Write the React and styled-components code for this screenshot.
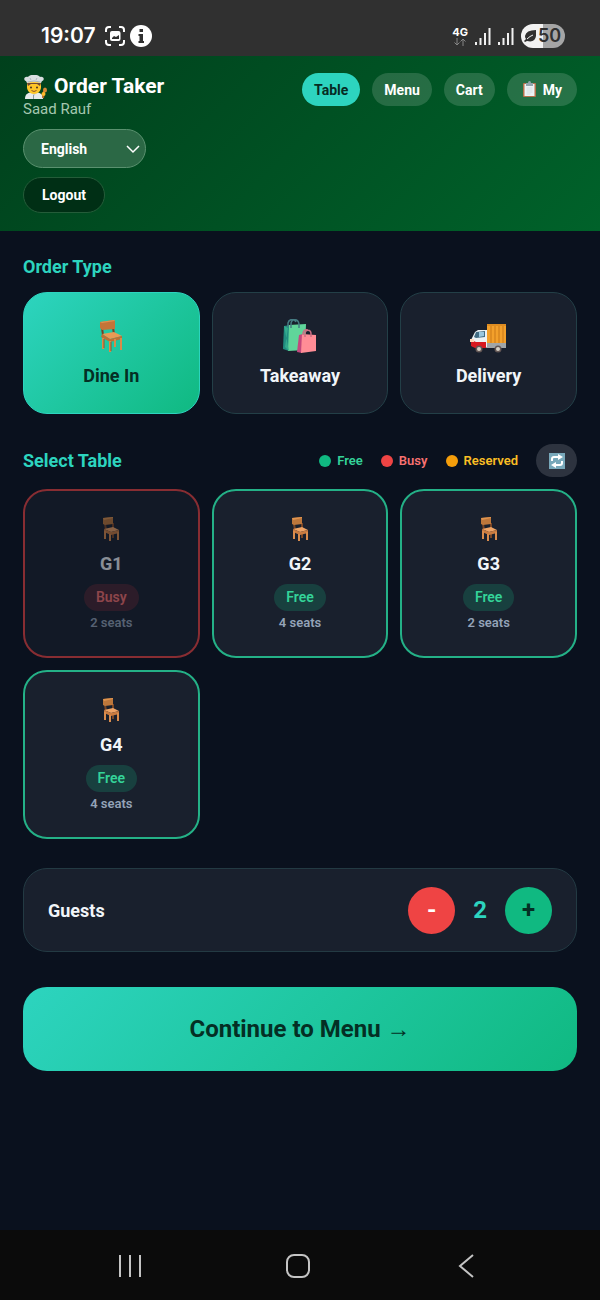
import React, { useState } from "react";
import styled, { createGlobalStyle } from "styled-components";

const GlobalStyle = createGlobalStyle`
  *, *::before, *::after { box-sizing: border-box; }
  body {
    margin: 0;
    background: #0a111e;
    color: #f1f5f9;
    font-family: Roboto, "Liberation Sans", sans-serif;
  }
  button, select { font: inherit; color: inherit; cursor: pointer; }
`;

const Screen = styled.div`
  display: flex;
  flex-direction: column;
  min-height: 100vh;
`;

const StatusBar = styled.div`
  display: flex;
  justify-content: space-between;
  align-items: center;
  height: 56px;
  padding: 16px 35px 0 41px;
  background: #303030;
  color: #fff;
`;

const StatusGroup = styled.div`
  display: flex;
  align-items: center;
  gap: ${(p) => p.$gap}px;
`;

const Clock = styled.span`
  margin-right: 4px;
  font: 600 21px/24px Inter, sans-serif;
`;

const Network = styled.div`
  display: flex;
  flex-direction: column;
  align-items: center;
  font: 700 11px/11px Inter, sans-serif;
`;

const Battery = styled.div`
  display: flex;
  align-items: center;
  gap: 1px;
  width: 44px;
  height: 24px;
  padding-left: 3px;
  border-radius: 12px;
  background: linear-gradient(90deg, #f2f2f2 50%, #a5a5a5 50%);
  color: #303030;
  font: 600 18px/24px Inter, sans-serif;
`;

const Header = styled.header`
  display: flex;
  justify-content: space-between;
  align-items: flex-start;
  padding: 17px 23px 18px;
  background: linear-gradient(135deg, #00401c, #00622a);
`;

const Brand = styled.div`
  display: flex;
  flex-direction: column;
  align-items: flex-start;
`;

const Title = styled.h1`
  display: flex;
  align-items: center;
  gap: 6px;
  margin: 0;
  font-size: 21px;
  line-height: 27px;
  font-weight: 700;
  color: #fff;
`;

const UserName = styled.div`
  margin-bottom: 10px;
  font-size: 15px;
  line-height: 19px;
  color: #a5c8b0;
`;

const LanguageField = styled.label`
  position: relative;
  display: block;
  margin-bottom: 9px;
`;

const LanguageSelect = styled.select`
  display: block;
  appearance: none;
  width: 123px;
  height: 39px;
  padding: 0 32px 0 17px;
  border: 1px solid #5a916f;
  border-radius: 20px;
  background: #2b6845;
  color: #fff;
  font-size: 14px;
  font-weight: 700;
`;

const SelectArrow = styled.svg`
  position: absolute;
  right: 6px;
  top: 16px;
  pointer-events: none;
`;

const LogoutButton = styled.button`
  height: 36px;
  padding: 0 18px;
  border: 1px solid #245c39;
  border-radius: 18px;
  background: #002f15;
  color: #fff;
  font-size: 14px;
  font-weight: 700;
`;

const Tabs = styled.nav`
  display: flex;
  gap: 12px;
`;

const Tab = styled.button`
  display: flex;
  align-items: center;
  gap: 6px;
  height: 33px;
  padding: 0 ${(p) => (p.$wide ? 15 : 12)}px;
  border: 0;
  border-radius: 17px;
  background: ${(p) => (p.$active ? "#2dd4bf" : "rgba(255, 255, 255, 0.15)")};
  color: ${(p) => (p.$active ? "#062b23" : "#fff")};
  font-size: 14px;
  font-weight: 700;
`;

const Main = styled.main`
  flex: 1;
  padding: 24px 23px 48px;
`;

const SectionTitle = styled.h2`
  margin: 0;
  font-size: 18px;
  line-height: 24px;
  font-weight: 700;
  color: #2dd4bf;
`;

const CardGrid = styled.div`
  display: grid;
  grid-template-columns: repeat(3, 1fr);
  gap: 12px;
  margin-top: ${(p) => p.$top}px;
`;

const TypeCard = styled.button`
  display: flex;
  flex-direction: column;
  align-items: center;
  justify-content: center;
  gap: 11px;
  height: 122px;
  border: 1px solid ${(p) => (p.$active ? "#2dd4bf" : "#233f47")};
  border-radius: 24px;
  background: ${(p) =>
    p.$active ? "linear-gradient(135deg, #2dd4bf, #10b981)" : "#19202d"};
  color: ${(p) => (p.$active ? "#042f24" : "#f1f5f9")};
  font-size: 18px;
  line-height: 24px;
  font-weight: 700;
`;

const SectionBar = styled.div`
  display: flex;
  align-items: center;
  justify-content: space-between;
  margin-top: 30px;
`;

const Legend = styled.div`
  display: flex;
  align-items: center;
  gap: 18px;
`;

const LegendItem = styled.span`
  display: flex;
  align-items: center;
  gap: 6px;
  font-size: 13px;
  font-weight: 600;
  color: ${(p) => p.$text};
  &::before {
    content: "";
    width: 12px;
    height: 12px;
    border-radius: 50%;
    background: ${(p) => p.$dot};
  }
`;

const RefreshButton = styled.button`
  display: grid;
  place-items: center;
  width: 41px;
  height: 33px;
  padding: 0;
  border: 0;
  border-radius: 17px;
  background: #2d333f;
`;

const TableCard = styled.button`
  display: flex;
  flex-direction: column;
  align-items: center;
  height: 169px;
  padding: 25px 12px 12px;
  border: 2px solid ${(p) => (p.$busy ? "#ef4444" : "#24b187")};
  border-radius: 24px;
  background: #19202d;
  opacity: ${(p) => (p.$busy ? 0.55 : 1)};
`;

const TableName = styled.span`
  margin-top: 10px;
  font-size: 18px;
  line-height: 24px;
  font-weight: 700;
  color: #f1f5f9;
`;

const TableState = styled.span`
  margin-top: 8px;
  padding: 0 12px;
  border-radius: 14px;
  background: ${(p) => (p.$busy ? "#492632" : "#18403f")};
  color: ${(p) => (p.$busy ? "#f87171" : "#34d399")};
  font-size: 14px;
  line-height: 27px;
  font-weight: 600;
`;

const Seats = styled.span`
  margin-top: 4px;
  font-size: 13px;
  line-height: 16px;
  font-weight: 600;
  color: #94a3b8;
`;

const GuestPanel = styled.section`
  display: flex;
  align-items: center;
  justify-content: space-between;
  height: 84px;
  margin-top: 29px;
  padding: 0 24px;
  border: 1px solid #233a43;
  border-radius: 24px;
  background: #19202d;
`;

const GuestLabel = styled.span`
  font-size: 18px;
  font-weight: 700;
`;

const Stepper = styled.div`
  display: flex;
  align-items: center;
  gap: 18px;
`;

const StepButton = styled.button`
  width: 47px;
  height: 47px;
  padding: 0;
  border: 0;
  border-radius: 50%;
  background: ${(p) => (p.$minus ? "#ef4444" : "#10b981")};
  color: ${(p) => (p.$minus ? "#fff" : "#042f24")};
  font-size: 24px;
  font-weight: 700;
`;

const GuestCount = styled.output`
  font-size: 24px;
  font-weight: 700;
  color: #2dd4bf;
`;

const ContinueButton = styled.button`
  width: 100%;
  height: 84px;
  margin-top: 35px;
  border: 0;
  border-radius: 24px;
  background: linear-gradient(135deg, #2dd4bf, #10b981);
  color: #042f24;
  font-size: 24px;
  font-weight: 700;
`;

const SystemNav = styled.nav`
  display: grid;
  grid-template-columns: repeat(3, 168px);
  justify-content: center;
  height: 70px;
  padding: 2px 4px 0 0;
  background: #0b0b0b;
`;

const SystemButton = styled.button`
  display: grid;
  place-items: center;
  padding: 0;
  border: 0;
  background: none;
`;

const ChefIcon = () => (
  <svg width="25" height="24" viewBox="0 0 25 24" aria-hidden="true">
    <path d="M2 24c0-5 3-7 9-7s9 2 9 7z" fill="#e6eaec" />
    <path d="M8 17h6l-3 4z" fill="#c5ced2" />
    <path d="M10.500 20v4" stroke="#8f9ca2" />
    <path d="M4 7h14v5c0 4-3 7-7 7s-7-3-7-7z" fill="#ffc629" />
    <path d="M4 8h14l-1 3-3-2H8l-3 2z" fill="#704a35" />
    <circle cx="8" cy="12.500" r="1" fill="#493326" />
    <circle cx="14" cy="12.500" r="1" fill="#493326" />
    <path d="M8.500 15.500q2.500 2 5 0" stroke="#8b5425" fill="none" />
    <path d="M4 8 3 6C0 5 1 1 5 2c2-3 10-3 12 0 4-1 5 3 2 4l-1 2q-7-2-14 0z" fill="#d9dee1" />
    <path d="M4.500 7q6.500-2 13 0M7 3l1 2m6-2-1 2" stroke="#aab5ba" fill="none" />
    <path d="m21 16-1 7" stroke="#b66a25" strokeWidth="2" />
    <ellipse cx="22" cy="15" rx="2" ry="2.500" fill="#d98935" />
    <circle cx="20.500" cy="19" r="2" fill="#ffb92a" />
  </svg>
);

const ClipboardIcon = () => (
  <svg width="15" height="17" viewBox="0 0 15 17" aria-hidden="true">
    <rect x="1" y="2" width="13" height="14" rx="1" fill="#b6704b" />
    <path d="M2.500 3h10v12h-10z" fill="#edf3f6" />
    <path d="M4 2h2q0-2 1.500-2T9 2h2v3H4z" fill="#91a4ad" />
    <path d="M4.500 7h6m-6 2h6m-6 2h6m-6 2h4" stroke="#d5dee2" />
  </svg>
);

const FrontChairIcon = () => (
  <svg width="34" height="34" viewBox="0 0 34 34" aria-hidden="true">
    <path d="m8 9 1 7m10-7 1 6" stroke="#744426" strokeWidth="2" />
    <path d="m6 3 14-2 1 1v8L8 11 6 9z" fill="#c47438" />
    <path d="m6 3 14-2 1 1L8 4z" fill="#dd9350" />
    <path d="m8 15 12-2 8 4-12 3z" fill="#e99a55" />
    <path d="m8 15 8 5v3l-9-5zM16 20l12-3v3l-12 3z" fill="#bd6f35" />
    <path d="M8 19h2v11H8zM15 22h2v11h-2zM26 19h2v12h-2zM20 20h2v8h-2z" fill="#d98b4a" />
    <path d="M10 20v9m7-6v9" stroke="#8f562e" />
  </svg>
);

const BagsIcon = () => (
  <svg width="34" height="34" viewBox="0 0 34 34" aria-hidden="true">
    <path d="m1 7 6-1-1 26-6-2z" fill="#218d80" />
    <path d="m6 6 17-1-1 26-17 1z" fill="#60d59a" />
    <path d="m1 7 4 2-3 19 4 4" fill="#34aa8c" />
    <path d="M8 9V5c0-5 7-6 8 0v4M5 8V4c1-4 6-5 8-1" fill="none" stroke="#467c83" strokeWidth="1.500" />
    <path d="m16 16 4-1-1 19-5-1z" fill="#c3487d" />
    <path d="m19 15 14 1v16l-15 2z" fill="#ff8d96" />
    <path d="M22 18v-3c0-5 6-5 6 0v3M20 16c0-5 2-6 5-5" fill="none" stroke="#cc6f83" strokeWidth="1.500" />
  </svg>
);

const TruckIcon = () => (
  <svg width="37" height="34" viewBox="0 0 37 34" aria-hidden="true">
    <path d="M17 5h19v19H17z" fill="#f3a02b" />
    <path d="M17 6h19M21 7v17m4-17v17m4-17v17m4-17v17" stroke="#c97918" fill="none" />
    <path d="M15 24h21v5H15z" fill="#a0a5a8" />
    <path d="m5 13 3-2h9v17H3l-2-7z" fill="#edf2f4" />
    <path d="m6 13 9-1v6l-9 1-2-1z" fill="#426c83" />
    <path d="M9 13h5v4l-5 1z" fill="#99c7df" />
    <path d="M1 21 6 23h10v6H5l-4-2z" fill="#d71920" />
    <path d="M0 20h4v3H0z" fill="#ffd9bc" />
    <circle cx="9" cy="30" r="3.500" fill="#625654" /><circle cx="9" cy="30" r="2" fill="#d6d1c7" />
    <circle cx="28" cy="30" r="3.500" fill="#625654" /><circle cx="28" cy="30" r="2" fill="#d6d1c7" />
  </svg>
);

const TableChairIcon = () => (
  <svg width="24" height="26" viewBox="0 0 24 26" aria-hidden="true">
    <path d="m6 8 1 6m7-7v6m0 3v6" stroke="#774526" strokeWidth="2" />
    <path d="m4 2 10-1v7L6 9 4 8z" fill="#bd773b" />
    <path d="m4 2 10-1v1L5 4z" fill="#df944f" />
    <path d="m5 13 9-2 6 3-8 2z" fill="#efa466" />
    <path d="m5 13 7 3 8-2v3l-8 2-7-3z" fill="#c97b40" />
    <path d="M5 15h2v8H5zM10 18h2v7h-2zM18 16h2v8h-2z" fill="#d98c4d" />
  </svg>
);

const RefreshIcon = () => (
  <svg width="16" height="16" viewBox="0 0 16 16" aria-hidden="true">
    <path d="M0 0h16v16H0z" fill="#78a8ba" />
    <path d="M3 8V6q0-2 2-2h5M13 8v2q0 2-2 2H6" fill="none" stroke="#fff" strokeWidth="2" />
    <path d="m9 1 5 3-5 3zM7 9l-5 3 5 3z" fill="#fff" />
  </svg>
);

const CaptureIcon = () => (
  <svg width="20" height="20" viewBox="0 0 20 20" fill="none" aria-hidden="true">
    <path d="M1 6V4q0-3 3-3h2M14 1h2q3 0 3 3v2M19 14v2q0 3-3 3h-2M6 19H4q-3 0-3-3v-2" stroke="#fff" strokeWidth="2" />
    <rect x="5" y="5" width="10.500" height="10" rx="2" fill="#fff" />
    <path d="m7 12 2-2 2 1 3-2v4H7z" fill="#303030" />
  </svg>
);

const InfoIcon = () => (
  <svg width="22" height="22" viewBox="0 0 22 22" aria-hidden="true">
    <circle cx="11" cy="11" r="11" fill="#fff" />
    <path d="M9.500 4h3.500v3H9.500zM8.500 9H13v7h1v2H8.500v-2h1v-5h-1z" fill="#303030" />
  </svg>
);

const DataArrows = () => (
  <svg width="12" height="8" viewBox="0 0 12 8" fill="none" stroke="#858585" aria-hidden="true">
    <path d="M3 0v7M.500 4.500 3 7l2.500-2.500M9 8V1M6.500 3.500 9 1l2.500 2.500" />
  </svg>
);

const SignalIcon = () => (
  <svg width="16" height="17" viewBox="0 0 16 17" fill="none" aria-hidden="true">
    <path d="M1 14v3M5.500 10v7M10 5v12M14.500 0v17" stroke="#f1f1f1" strokeWidth="2" />
  </svg>
);

const LeafIcon = () => (
  <svg width="13" height="12" viewBox="0 0 13 12" aria-hidden="true">
    <path d="M12 0Q2 0 1 6q0 2 1 3l-2 2 1 1 2-1q8 2 9-5z" fill="#303030" />
    <path d="M3 9q3-3 6-4" fill="none" stroke="#f2f2f2" />
  </svg>
);

const orderTypes = [
  { name: "Dine In", Icon: FrontChairIcon },
  { name: "Takeaway", Icon: BagsIcon },
  { name: "Delivery", Icon: TruckIcon },
];

const tables = [
  { name: "G1", seats: 2, busy: true },
  { name: "G2", seats: 4 },
  { name: "G3", seats: 2 },
  { name: "G4", seats: 4 },
];

export default function App() {
  const [orderType, setOrderType] = useState("Dine In");
  const [guests, setGuests] = useState(2);

  return (
    <>
      <GlobalStyle />
      <Screen>
        <StatusBar>
          <StatusGroup $gap={5}>
            <Clock>19:07</Clock>
            <CaptureIcon />
            <InfoIcon />
          </StatusGroup>
          <StatusGroup $gap={7}>
            <Network>4G<DataArrows /></Network>
            <SignalIcon />
            <SignalIcon />
            <Battery><LeafIcon />50</Battery>
          </StatusGroup>
        </StatusBar>

        <Header>
          <Brand>
            <Title><ChefIcon />Order Taker</Title>
            <UserName>Saad Rauf</UserName>
            <LanguageField>
              <LanguageSelect aria-label="Language" defaultValue="English">
                <option>English</option>
              </LanguageSelect>
              <SelectArrow width="14" height="9" viewBox="0 0 14 9" fill="none" stroke="#fff" strokeWidth="1.500" aria-hidden="true">
                <path d="m1 1 6 6 6-6" />
              </SelectArrow>
            </LanguageField>
            <LogoutButton type="button">Logout</LogoutButton>
          </Brand>
          <Tabs>
            <Tab type="button" $active>Table</Tab>
            <Tab type="button">Menu</Tab>
            <Tab type="button">Cart</Tab>
            <Tab type="button" $wide><ClipboardIcon />My</Tab>
          </Tabs>
        </Header>

        <Main>
          <SectionTitle>Order Type</SectionTitle>
          <CardGrid $top={13}>
            {orderTypes.map(({ name, Icon }) => (
              <TypeCard
                key={name}
                type="button"
                $active={name === orderType}
                aria-pressed={name === orderType}
                onClick={() => setOrderType(name)}
              >
                <Icon />
                {name}
              </TypeCard>
            ))}
          </CardGrid>

          <SectionBar>
            <SectionTitle>Select Table</SectionTitle>
            <Legend>
              <LegendItem $dot="#10b981" $text="#34d399">Free</LegendItem>
              <LegendItem $dot="#ef4444" $text="#f87171">Busy</LegendItem>
              <LegendItem $dot="#f59e0b" $text="#fbbf24">Reserved</LegendItem>
              <RefreshButton type="button" aria-label="Refresh"><RefreshIcon /></RefreshButton>
            </Legend>
          </SectionBar>
          <CardGrid $top={12}>
            {tables.map(({ name, seats, busy }) => (
              <TableCard key={name} type="button" $busy={busy} disabled={busy}>
                <TableChairIcon />
                <TableName>{name}</TableName>
                <TableState $busy={busy}>{busy ? "Busy" : "Free"}</TableState>
                <Seats>{seats} seats</Seats>
              </TableCard>
            ))}
          </CardGrid>

          <GuestPanel>
            <GuestLabel>Guests</GuestLabel>
            <Stepper>
              <StepButton type="button" $minus aria-label="Fewer guests" onClick={() => setGuests(Math.max(1, guests - 1))}>-</StepButton>
              <GuestCount>{guests}</GuestCount>
              <StepButton type="button" aria-label="More guests" onClick={() => setGuests(guests + 1)}>+</StepButton>
            </Stepper>
          </GuestPanel>

          <ContinueButton type="button">Continue to Menu →</ContinueButton>
        </Main>

        <SystemNav aria-label="System">
          <SystemButton type="button" aria-label="Recent apps">
            <svg width="22" height="24" viewBox="0 0 22 24" stroke="#c4c4c4" strokeWidth="2"><path d="M1 1v22M11 1v22M21 1v22" /></svg>
          </SystemButton>
          <SystemButton type="button" aria-label="Home">
            <svg width="24" height="24" viewBox="0 0 24 24" fill="none" stroke="#c4c4c4" strokeWidth="2"><rect x="1" y="1" width="22" height="22" rx="7" /></svg>
          </SystemButton>
          <SystemButton type="button" aria-label="Back">
            <svg width="16" height="24" viewBox="0 0 16 24" fill="none" stroke="#c4c4c4" strokeWidth="2"><path d="M15 1 2 12l13 11" /></svg>
          </SystemButton>
        </SystemNav>
      </Screen>
    </>
  );
}
